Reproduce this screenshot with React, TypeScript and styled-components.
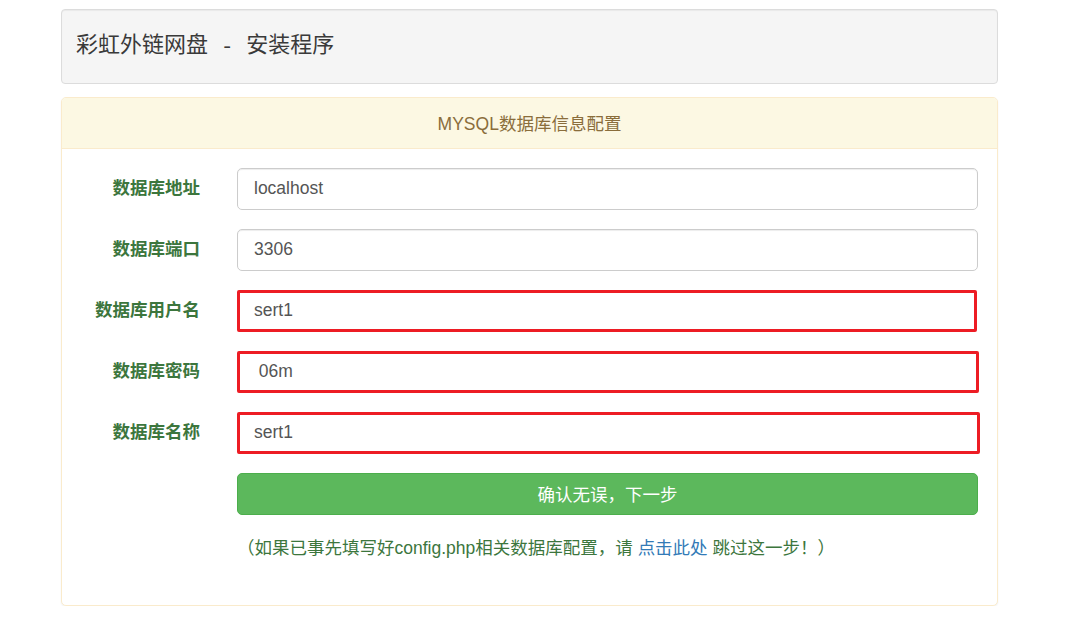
import React from 'react';
import styled, { createGlobalStyle } from 'styled-components';

const GlobalStyle = createGlobalStyle`
  html, body {
    margin: 0;
    padding: 0;
    background: #fff;
  }
  body {
    font-family: "Liberation Sans", "Noto Sans CJK SC", sans-serif;
    color: #333;
  }
  * {
    box-sizing: border-box;
  }
`;

const Page = styled.div`
  width: 937px;
  margin-left: 61px;
  padding-top: 9px;
`;

const Well = styled.div`
  height: 75px;
  background: #f5f5f5;
  border: 1px solid #dcdcdc;
  border-radius: 4px;
  box-shadow: inset 0 1px 1px rgba(0, 0, 0, 0.05);
  display: flex;
  align-items: center;
  padding: 0 14px 4px;
  margin-bottom: 13px;
`;

const Title = styled.h1`
  margin: 0;
  font-family: "Liberation Serif", "Noto Sans CJK SC", serif;
  font-weight: 400;
  font-size: 22px;
  color: #3a3a3a;
  word-spacing: 10px;
  line-height: 1;
`;

const Panel = styled.div`
  border: 1px solid #faebcc;
  border-radius: 5px;
  background: #fff;
  box-shadow: 0 1px 2px rgba(0, 0, 0, 0.06);
  overflow: hidden;
`;

const PanelHeading = styled.div`
  height: 51px;
  background: #fcf8e3;
  border-bottom: 1px solid #faebcc;
  color: #8a6d3b;
  font-size: 17.5px;
  display: flex;
  align-items: center;
  justify-content: center;
  padding-bottom: 2px;
`;

const PanelBody = styled.div`
  padding: 19px 19px 44px 19px;
`;

const Form = styled.form`
  display: grid;
  grid-template-columns: 119px 1fr;
  column-gap: 37px;
  row-gap: 19px;
  align-items: center;
`;

const Label = styled.label`
  text-align: right;
  font-weight: 700;
  font-size: 17.5px;
  line-height: 1;
  color: #3c763d;
`;

const Input = styled.input<{ $marked?: boolean; $over?: number }>`
  height: 42px;
  width: calc(100% + ${(p) => p.$over ?? 0}px);
  padding: 0 ${(p) => (p.$marked ? 14 : 16)}px 1px;
  font-family: "Liberation Sans", "Noto Sans CJK SC", sans-serif;
  font-size: 17.5px;
  color: #555;
  background: #fff;
  border: ${(p) => (p.$marked ? '3px solid #ed1c24' : '1px solid #ccc')};
  border-radius: ${(p) => (p.$marked ? 2 : 5)}px;
  box-shadow: ${(p) => (p.$marked ? 'none' : 'inset 0 1px 1px rgba(0, 0, 0, 0.075)')};
  outline: none;
`;

const Spacer = styled.div``;

const SubmitButton = styled.button`
  height: 42px;
  width: 100%;
  padding-bottom: 2px;
  background: #5cb85c;
  border: 1px solid #4cae4c;
  border-radius: 5px;
  color: #fff;
  font-family: "Liberation Sans", "Noto Sans CJK SC", sans-serif;
  font-size: 17.5px;
  cursor: pointer;
`;

const Hint = styled.p`
  margin: 2px 0 0;
  font-size: 17.5px;
  line-height: 25px;
  color: #3c763d;
`;

const Link = styled.a`
  color: #337ab7;
  text-decoration: none;
`;

const fields = [
  { label: '数据库地址', value: 'localhost' },
  { label: '数据库端口', value: '3306' },
  { label: '数据库用户名', value: 'sert1', marked: true, over: -1 },
  { label: '数据库密码', value: ' 06m', marked: true, over: 1 },
  { label: '数据库名称', value: 'sert1', marked: true, over: 2 },
];

const App = () => {
  return (
    <Page>
      <GlobalStyle />
      <Well>
        <Title>彩虹外链网盘 - 安装程序</Title>
      </Well>
      <Panel>
        <PanelHeading>MYSQL数据库信息配置</PanelHeading>
        <PanelBody>
          <Form onSubmit={(e) => e.preventDefault()}>
            {fields.map((f) => (
              <React.Fragment key={f.label}>
                <Label>{f.label}</Label>
                <Input defaultValue={f.value} $marked={f.marked} $over={f.over} />
              </React.Fragment>
            ))}
            <Spacer />
            <SubmitButton type="submit">确认无误，下一步</SubmitButton>
            <Spacer />
            <Hint>
              （如果已事先填写好config.php相关数据库配置，请 <Link href="#">点击此处</Link> 跳过这一步！）
            </Hint>
          </Form>
        </PanelBody>
      </Panel>
    </Page>
  );
};

export default App;
